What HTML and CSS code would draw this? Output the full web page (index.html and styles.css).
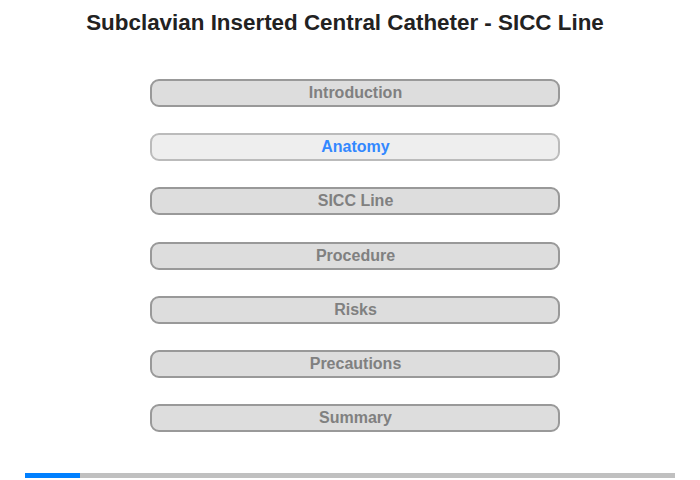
FILE: index.html
```html
<!DOCTYPE html>
<html lang="en">
<head>
  <meta charset="UTF-8" />
  <title>Subclavian Inserted Central Catheter - SICC Line</title>
  <link rel="stylesheet" href="styles.css">
</head>
<body>
  <h1>Subclavian Inserted Central Catheter - SICC Line</h1>

  <div class="menu">
    <div class="item">Introduction</div>
    <div class="item active">Anatomy</div>
    <div class="item">SICC Line</div>
    <div class="item">Procedure</div>
    <div class="item">Risks</div>
    <div class="item">Precautions</div>
    <div class="item">Summary</div>
  </div>

  <div class="progress"><div class="bar" style="width: 55px"></div></div>
</body>
</html>
```

FILE: styles.css
```css
body { font-family: "Liberation Sans", Arial, sans-serif; margin: 0; background: #fff; color: #222; }
h1 { font-size: 22.4px; font-weight: bold; text-align: center; margin: 0; padding: 10px 10px 0 0; height: 79px; box-sizing: border-box; }
.menu { display: flex; flex-direction: column; align-items: center; gap: 26.2px; padding-left: 9px; }
.item { width: 410px; height: 28px; box-sizing: border-box; border: 2px solid #999; border-radius: 9px; background: #ddd; color: #808080; font-size: 16px; font-weight: bold; text-align: center; line-height: 24px; padding-left: 2px; }
.item.active { background: #eee; border-color: #bbb; color: #3388ff; }
.progress { margin: 41px 25px 0; height: 5px; background: #c0c0c0; }
.bar { height: 100%; background: #0080ff; }
```
